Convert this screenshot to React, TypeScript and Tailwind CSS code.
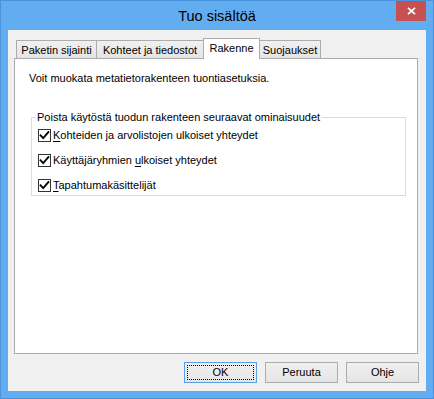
import React from "react";

function CheckBox() {
  return (
    <span className="w-[13px] h-[13px] shrink-0 border border-[#333333] bg-white flex items-center justify-center">
      <svg width="11" height="11" viewBox="0 0 11 11">
        <path d="M1.6 5.4 L4.2 8.1 L9.4 2.2" fill="none" stroke="#000" strokeWidth="1.9" strokeLinecap="square" strokeLinejoin="miter" />
      </svg>
    </span>
  );
}

function Row({ children }: { children: React.ReactNode }) {
  return (
    <div className="flex items-center gap-[2px] h-[13px]">
      <CheckBox />
      <span className="whitespace-nowrap leading-[13px]">{children}</span>
    </div>
  );
}

function Tab({ label, w, active, first }: { label: string; w: string; active?: boolean; first?: boolean }) {
  if (active) {
    return (
      <div className={`${w} -ml-px h-[21px] -mb-px relative z-10 bg-white border border-b-0 border-[#acacac] flex items-center justify-center pb-[2px] whitespace-nowrap`}>
        {label}
      </div>
    );
  }
  return (
    <div className={`${w} ${first ? "" : "-ml-px"} h-[18px] bg-linear-to-b from-[#f0f0f0] to-[#e5e5e5] border border-b-0 border-[#acacac] flex items-center justify-center pt-[1px] whitespace-nowrap`}>
      {label}
    </div>
  );
}

function Button({ label, def }: { label: string; def?: boolean }) {
  return (
    <div
      className={`relative w-[73px] h-[21px] bg-linear-to-b from-[#f0f0f0] to-[#e5e5e5] border ${def ? "border-[#5b9fe3]" : "border-[#acacac]"} flex items-center justify-center`}
    >
      {def && <span className="absolute inset-[2px] border border-dotted border-black" />}
      <span className="leading-[13px]">{label}</span>
    </div>
  );
}

export default function App() {
  return (
    <div className="w-[434px] h-[399px] bg-[#62adf0] border border-[#4a92dc] flex flex-col font-['Liberation_Sans',Arial,sans-serif] text-[11px] leading-[13px] text-black select-none">
      <div className="relative h-[29px] shrink-0 flex items-center justify-center">
        <span className="text-[14.5px] leading-[18px] text-black">Tuo sisältöä</span>
        <div className="absolute right-[7px] top-0 w-[30px] h-[20px] bg-[#c75050] flex items-center justify-center">
          <svg width="9" height="8" viewBox="0 0 9 8">
            <path d="M1 0.8 L8 7.2 M8 0.8 L1 7.2" stroke="#fff" strokeWidth="1.8" fill="none" />
          </svg>
        </div>
      </div>
      <div className="mx-[7px] mb-[7px] flex-1 bg-[#f0f0f0] flex flex-col">
        <div className="mt-[8px] h-[20px] pl-[8px] flex items-end shrink-0">
          <Tab label="Paketin sijainti" w="w-[81px]" first />
          <Tab label="Kohteet ja tiedostot" w="w-[108px]" />
          <Tab label="Rakenne" w="w-[57px]" active />
          <Tab label="Suojaukset" w="w-[62px]" />
        </div>
        <div className="ml-[6px] mr-[8px] flex-1 bg-white border border-[#acacac] flex flex-col">
          <p className="pt-[13px] pl-[14px] leading-[13px]">Voit muokata metatietorakenteen tuontiasetuksia.</p>
          <div className="relative mt-[32px] ml-[16px] w-[375px] border border-[#dcdcdc] pt-[11px] pb-[3px] pl-[6px] flex flex-col gap-[12px]">
            <span className="absolute left-[4px] -top-[7px] px-[1px] bg-white leading-[13px] whitespace-nowrap">
              Poista käytöstä tuodun rakenteen seuraavat ominaisuudet
            </span>
            <Row>
              <span className="underline underline-offset-[2px]">K</span>ohteiden ja arvolistojen ulkoiset yhteydet
            </Row>
            <Row>
              Käyttäjäryhmien <span className="underline underline-offset-[2px]">u</span>lkoiset yhteydet
            </Row>
            <Row>
              <span className="underline underline-offset-[2px]">T</span>apahtumakäsittelijät
            </Row>
          </div>
        </div>
        <div className="mt-[8px] mb-[8px] pr-[7px] flex justify-end gap-[8px] shrink-0">
          <Button label="OK" def />
          <Button label="Peruuta" />
          <Button label="Ohje" />
        </div>
      </div>
    </div>
  );
}
